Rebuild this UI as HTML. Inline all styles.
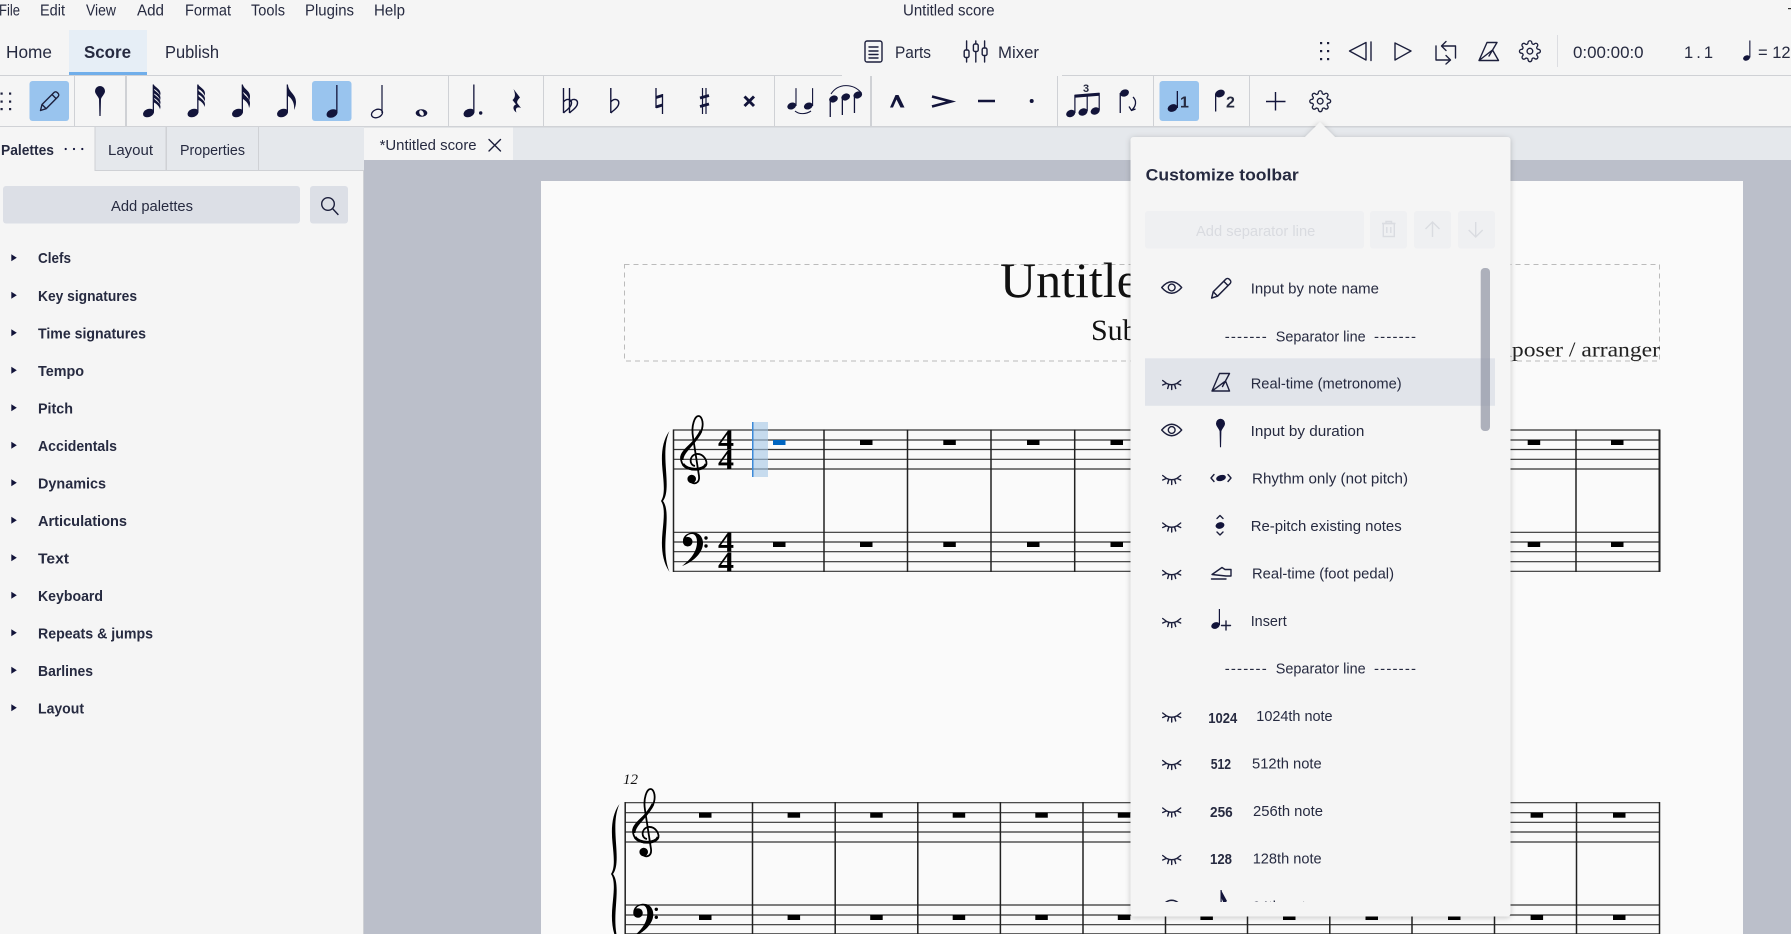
<!DOCTYPE html>
<html lang="en">
<head>
<meta charset="utf-8">
<title>Untitled score</title>
<style>
html,body{margin:0;padding:0;background:#f5f5f5;overflow:hidden}
svg{display:block;position:absolute;left:0;top:0}
text{font-family:"Liberation Sans",sans-serif;fill:#262a40;font-size:15px}
.b{font-weight:700}
.s{font-family:"Liberation Serif",serif;fill:#111}
.ic{fill:none;stroke:#1c1f3c;stroke-width:1.4;stroke-linejoin:round;stroke-linecap:round}
.n{fill:#12143a}
.sep{stroke:#cfd1d5;stroke-width:1}
.st{stroke:#333;stroke-width:1.2}
.bar{stroke:#222;stroke-width:1.5}
.r{fill:#000}
.ds{fill:none;stroke:#dadce1;stroke-width:1.4}
</style>
</head>
<body>
<svg width="1791" height="934" viewBox="0 0 1791 934" xmlns="http://www.w3.org/2000/svg">
<defs>
<g id="q"><ellipse rx="5.7" ry="4" transform="rotate(-22)"/><rect x="4.2" y="-28.5" width="1.3" height="28"/></g>
<path id="fl" d="M0 0C1 4 7 6 7 11C7 13 6.6 15 6 16C6 12 3 9 0 7Z"/>
<path id="fs" d="M0 0C1 2 6.5 4 6.5 8.5L6 11C5.5 8 3 5.500 0 4Z"/>
<path id="pencil" d="M3 21.500L4.500 15.500L16.500 3.500a2.300 2.300 0 0 1 3.200 0l.9.9a2.300 2.300 0 0 1 0 3.200L8.600 19.700ZM14.500 5.500l4 4M4.500 15.500l4 4"/>
<path id="pin" d="M-5 0a5 5 0 0 1 10 0c0 3-3 5-4 8l-.4 17h-1.200L-1 8c-1-3-4-5-4-8z"/>
<path id="flat" d="M0 -13V12M0 1C3 -3 8 -2 8 2C8 6 3 9 0 12" fill="none" stroke="#12143a" stroke-width="1.400"/>
<g id="gear" fill="none" stroke="#1c1f3c" stroke-width="1.400" stroke-linejoin="round"><circle cx="12" cy="12" r="3"/><path d="M19.400 15a1.650 1.650 0 0 0 .33 1.820l.06.06a2 2 0 0 1 0 2.830 2 2 0 0 1-2.830 0l-.06-.06a1.650 1.650 0 0 0-1.820-.33 1.650 1.650 0 0 0-1 1.510V21a2 2 0 0 1-2 2 2 2 0 0 1-2-2v-.09A1.650 1.650 0 0 0 9 19.400a1.650 1.650 0 0 0-1.820.33l-.06.06a2 2 0 0 1-2.830 0 2 2 0 0 1 0-2.830l.06-.06a1.650 1.650 0 0 0 .33-1.820 1.650 1.650 0 0 0-1.510-1H3a2 2 0 0 1-2-2 2 2 0 0 1 2-2h.09A1.650 1.650 0 0 0 4.600 9a1.650 1.650 0 0 0-.33-1.820l-.06-.06a2 2 0 0 1 0-2.830 2 2 0 0 1 2.830 0l.06.06a1.650 1.650 0 0 0 1.820.33H9a1.650 1.650 0 0 0 1-1.510V3a2 2 0 0 1 2-2 2 2 0 0 1 2 2v.09a1.650 1.650 0 0 0 1 1.510 1.650 1.650 0 0 0 1.820-.33l.06-.06a2 2 0 0 1 2.830 0 2 2 0 0 1 0 2.830l-.06.06a1.650 1.650 0 0 0-.33 1.820V9a1.650 1.650 0 0 0 1.510 1H21a2 2 0 0 1 2 2 2 2 0 0 1-2 2h-.09a1.650 1.650 0 0 0-1.510 1z"/></g>
<g id="eye" class="ic" stroke-width="1.300"><path d="M-10 0Q0 -11.500 10 0Q0 11.500 -10 0Z"/><circle r="3.400"/></g>
<path id="eyec" class="ic" stroke-width="1.100" d="M-9 -2.500L-5 .5Q0 3 5 .5L9 -2.500M-9 2L-5.500 .5M9 2L5.500 .5M-3 2L-4 5.500M0 3V6.500M3 2L4 5.500"/>
<g id="tclef"><path d="M0 7C-6 6-6-3 1-5C9-6 13 3 11 6C8 12-14 14-14-1C-14-10 3-17 7-30C9-38 6-43 3.500-43C0-43-4-34-2-22L4 17C5 25-2 26-5 22" fill="none" stroke="#000" stroke-width="1.800"/><path d="M-13 1C-13-8 0-15 6-28M11 5C9 12-8 12-12 5" fill="none" stroke="#000" stroke-width="2.800"/><circle cx="-3.300" cy="20" r="4.300" fill="#000"/></g>
<path id="brace" d="M669.500 431C662 441 661 455 662.500 470C664 485 665 495 661 501C665 507 664 517 662.500 532C661 547 662 561 669.500 572C664.500 560 665 545 666 532C667 518 667.500 507 663 501C667.500 495 667 484 666 470C665 455 664.500 442 669.500 431Z"/>
<g id="bclef"><path d="M683 541C683 535 689 532.500 693 532.500C700 532.500 703 538 703 543C703 553 693 562 682 566C690 560 697 552 697 542C697 537 695 534 692 534C688 534 685 537 686 539Z"/><circle cx="687.700" cy="541.700" r="4.800"/><circle cx="706" cy="538" r="1.700"/><circle cx="706" cy="546" r="1.700"/></g>
<clipPath id="rows"><rect x="1140" y="258" width="360" height="644"/></clipPath>
<filter id="sh" x="-5%" y="-5%" width="110%" height="110%"><feDropShadow dx="0" dy="1" stdDeviation="3" flood-color="#000" flood-opacity=".22"/></filter>
</defs>

<!-- base -->
<rect width="1791" height="934" fill="#f5f5f5"/>
<rect x="0" y="127" width="1791" height="33" fill="#e5e8ec"/>
<rect x="364" y="160" width="1427" height="774" fill="#bbbfca"/>

<!-- score page -->
<rect x="541" y="181" width="1202" height="753" fill="#fafafa"/>
<rect x="624.500" y="264.500" width="1035" height="96.500" fill="none" stroke="#bbb" stroke-dasharray="5 4"/>
<text class="s" x="1000" y="297" style="font-size:50px">Untitled score</text>
<text class="s" x="1091" y="340" style="font-size:30px">Subtitle</text>
<text class="s" x="1466" y="356.500" style="font-size:21px;fill:#222" textLength="194" lengthAdjust="spacingAndGlyphs">Composer / arranger</text>

<!-- system 1 -->
<g class="st">
<path d="M673 430H1660M673 440H1660M673 449.500H1660M673 459.300H1660M673 469H1660M673 532.300H1660M673 542H1660M673 551.700H1660M673 561.700H1660M673 571.300H1660"/>
</g>
<g class="bar"><path d="M673.500 429.500V572M824 429.500V572M907.500 429.500V572M991 429.500V572M1074.700 429.500V572M1158.200 429.500V572M1241.700 429.500V572M1325.200 429.500V572M1408.700 429.500V572M1492.300 429.500V572M1576 429.500V572M1659.500 429.500V572" /></g>
<path d="M1659.500 429.500V572" stroke="#222" stroke-width="2"/>
<use href="#brace" class="r"/>
<use href="#tclef" x="695" y="459"/>
<use href="#bclef" class="r"/>
<text class="s b" x="718" y="449.500" style="font-size:29px;fill:#000" textLength="16" lengthAdjust="spacingAndGlyphs">4</text>
<text class="s b" x="718" y="469" style="font-size:29px;fill:#000" textLength="16" lengthAdjust="spacingAndGlyphs">4</text>
<text class="s b" x="718" y="551.700" style="font-size:29px;fill:#000" textLength="16" lengthAdjust="spacingAndGlyphs">4</text>
<text class="s b" x="718" y="571.500" style="font-size:29px;fill:#000" textLength="16" lengthAdjust="spacingAndGlyphs">4</text>
<rect x="752.500" y="422" width="15.500" height="55" fill="#a4c6e6" opacity=".6"/>
<rect x="752" y="422" width="1.500" height="55" fill="#3c8ad8"/>
<rect x="773" y="440" width="12.500" height="5" fill="#0065c0"/>
<g class="r">
<rect x="860" y="440" width="12.500" height="5"/><rect x="943.300" y="440" width="12.500" height="5"/><rect x="1027" y="440" width="12.500" height="5"/><rect x="1110.500" y="440" width="12.500" height="5"/><rect x="1527.700" y="440" width="12.500" height="5"/><rect x="1611" y="440" width="12.500" height="5"/>
<rect x="773" y="542" width="12.500" height="5"/><rect x="860" y="542" width="12.500" height="5"/><rect x="943.300" y="542" width="12.500" height="5"/><rect x="1027" y="542" width="12.500" height="5"/><rect x="1110.500" y="542" width="12.500" height="5"/><rect x="1527.700" y="542" width="12.500" height="5"/><rect x="1611" y="542" width="12.500" height="5"/>
</g>

<!-- system 2 -->
<text class="s" x="623" y="784" style="font-size:15px;font-style:italic">12</text>
<g class="st">
<path d="M625 802.700H1660M625 812.700H1660M625 822.300H1660M625 832H1660M625 842H1660M625 905H1660M625 915H1660M625 924.700H1660"/>
<path d="M625 933.800H1660"/>
</g>
<g class="bar"><path d="M625.200 802V934M752.500 802V934M835.200 802V934M917.800 802V934M1000.400 802V934M1083 802V934M1165.500 802V934M1247.500 802V934M1329.800 802V934M1412 802V934M1494.500 802V934M1576.500 802V934M1659.500 802V934"/></g>
<g transform="translate(-50 373)"><use href="#brace" class="r"/></g>
<use href="#tclef" x="647" y="832"/>
<g transform="translate(-49.700 371.300)"><use href="#bclef" class="r"/></g>
<g class="r">
<rect x="699" y="812.700" width="12.500" height="5"/><rect x="787.600" y="812.700" width="12.500" height="5"/><rect x="870.200" y="812.700" width="12.500" height="5"/><rect x="952.700" y="812.700" width="12.500" height="5"/><rect x="1035.300" y="812.700" width="12.500" height="5"/><rect x="1117.800" y="812.700" width="12.500" height="5"/><rect x="1530.600" y="812.700" width="12.500" height="5"/><rect x="1613" y="812.700" width="12.500" height="5"/>
<rect x="699" y="915" width="12.500" height="5"/><rect x="787.600" y="915" width="12.500" height="5"/><rect x="870.200" y="915" width="12.500" height="5"/><rect x="952.700" y="915" width="12.500" height="5"/><rect x="1035.300" y="915" width="12.500" height="5"/><rect x="1117.800" y="915" width="12.500" height="5"/><rect x="1200.400" y="915" width="12.500" height="5"/><rect x="1283" y="915" width="12.500" height="5"/><rect x="1365.500" y="915" width="12.500" height="5"/><rect x="1448" y="915" width="12.500" height="5"/><rect x="1530.600" y="915" width="12.500" height="5"/><rect x="1613" y="915" width="12.500" height="5"/>
</g>

<!-- top area cover -->
<rect x="0" y="0" width="1791" height="127" fill="#f5f5f5"/>
<rect x="0" y="75" width="842" height="1" fill="#cfd1d5"/>
<rect x="1062" y="75" width="729" height="1" fill="#cfd1d5"/>
<rect x="0" y="126" width="1791" height="1.500" fill="#d0d2d6"/>

<!-- menu -->
<g style="font-size:15.500px">
<text x="-1" y="15.500" textLength="21" lengthAdjust="spacingAndGlyphs" style="font-size:15.500px">File</text>
<text x="40" y="15.500" textLength="25" lengthAdjust="spacingAndGlyphs" style="font-size:15.500px">Edit</text>
<text x="86" y="15.500" textLength="30" lengthAdjust="spacingAndGlyphs" style="font-size:15.500px">View</text>
<text x="137" y="15.500" textLength="27" lengthAdjust="spacingAndGlyphs" style="font-size:15.500px">Add</text>
<text x="185" y="15.500" textLength="46" lengthAdjust="spacingAndGlyphs" style="font-size:15.500px">Format</text>
<text x="251" y="15.500" textLength="34" lengthAdjust="spacingAndGlyphs" style="font-size:15.500px">Tools</text>
<text x="305" y="15.500" textLength="49" lengthAdjust="spacingAndGlyphs" style="font-size:15.500px">Plugins</text>
<text x="374" y="15.500" textLength="31" lengthAdjust="spacingAndGlyphs" style="font-size:15.500px">Help</text>
<text x="903" y="15.500" textLength="91.600" lengthAdjust="spacingAndGlyphs" style="font-size:15.500px">Untitled score</text>
</g>
<rect x="1788" y="8" width="3" height="1.200" fill="#333"/>

<!-- nav -->
<rect x="69" y="30" width="78" height="42" fill="#e6eef6"/>
<rect x="69" y="72" width="78" height="3" fill="#70aeea"/>
<text x="6" y="58" textLength="46" lengthAdjust="spacingAndGlyphs" style="font-size:17.500px">Home</text>
<text class="b" x="84" y="58" textLength="47" lengthAdjust="spacingAndGlyphs" style="font-size:17.500px">Score</text>
<text x="165" y="58" textLength="54" lengthAdjust="spacingAndGlyphs" style="font-size:17.500px">Publish</text>
<g class="ic"><rect x="865" y="41" width="17" height="21" rx="2"/><path d="M869 47H878M869 51H878M869 54.500H878M869 58H878"/></g>
<text x="895" y="58" textLength="36" lengthAdjust="spacingAndGlyphs" style="font-size:17px">Parts</text>
<g class="ic"><path d="M966.600 41V62M975.800 41V62M984.600 41V62"/><rect x="964.200" y="50" width="4.800" height="7.500" rx="1.500" fill="#f5f5f5"/><rect x="973.400" y="44" width="4.800" height="7.500" rx="1.500" fill="#f5f5f5"/><rect x="982.200" y="48" width="4.800" height="7.500" rx="1.500" fill="#f5f5f5"/></g>
<text x="998" y="58" textLength="41" lengthAdjust="spacingAndGlyphs" style="font-size:17px">Mixer</text>

<!-- playback -->
<g fill="#1c1f3c"><rect x="1320" y="42" width="2.200" height="2.200"/><rect x="1327" y="42" width="2.200" height="2.200"/><rect x="1320" y="50" width="2.200" height="2.200"/><rect x="1327" y="50" width="2.200" height="2.200"/><rect x="1320" y="58" width="2.200" height="2.200"/><rect x="1327" y="58" width="2.200" height="2.200"/></g>
<g class="ic">
<path d="M1349.500 51L1366 42.500V60ZM1371 42V60.500"/>
<path d="M1395 43L1411 51L1395 60Z"/>
<path d="M1455.500 58V46H1441.500M1446 41.500L1441.500 46L1446 50.500M1436 46V60H1450.500M1446 55.500L1450.500 60L1446 64"/>
<path d="M1479 60.500L1487 42.500H1497L1489 56M1492.500 50L1498.500 60.500H1479Z"/>
</g>
<g transform="translate(1518.500 39.800) scale(.95)"><use href="#gear"/></g>
<rect x="1557" y="35" width="1" height="32" fill="#dcdde1"/>
<text x="1573" y="58" textLength="70.600" lengthAdjust="spacingAndGlyphs" style="font-size:16.500px">0:00:00:0</text>
<text x="1684" y="58" textLength="29" lengthAdjust="spacing" style="font-size:16.500px">1 . 1</text>
<g class="n" transform="translate(1746.500 58)"><ellipse rx="3.500" ry="2.600" transform="rotate(-22)"/><rect x="2.800" y="-17.500" width="1.100" height="17"/></g>
<text x="1758" y="58" style="font-size:16.500px">= 120</text>

<!-- toolbar -->
<g fill="#1c1f3c"><rect x=".5" y="92.500" width="2.200" height="2.200"/><rect x="9" y="92.500" width="2.200" height="2.200"/><rect x=".5" y="100.500" width="2.200" height="2.200"/><rect x="9" y="100.500" width="2.200" height="2.200"/><rect x=".5" y="108" width="2.200" height="2.200"/><rect x="9" y="108" width="2.200" height="2.200"/></g>
<rect x="29.500" y="81" width="39.500" height="40" rx="3" fill="#99c4ee"/>
<rect x="312" y="81" width="39.500" height="40" rx="3" fill="#99c4ee"/>
<rect x="1159.500" y="81" width="39.500" height="40" rx="3" fill="#99c4ee"/>
<g class="sep"><path d="M74.500 76V126M448.500 76V126M543.500 76V126M774.500 76V126M1057.500 76V126M1153.500 76V126M1249.500 76V126"/></g>
<path d="M126 76V126M871 76V126" stroke="#cfd1d5" stroke-width="2"/>
<g class="ic" transform="translate(37.500 89)"><use href="#pencil"/></g>
<g class="n">
<use href="#pin" x="100" y="91"/>
<g transform="translate(148.500 113)"><use href="#q"/><use href="#fs" x="5.500" y="-28"/><use href="#fs" x="5.500" y="-23.500"/><use href="#fs" x="5.500" y="-19"/><use href="#fs" x="5.500" y="-14.500"/></g>
<g transform="translate(193 113)"><use href="#q"/><use href="#fs" x="5.500" y="-28"/><use href="#fs" x="5.500" y="-22.500"/><use href="#fs" x="5.500" y="-17"/></g>
<g transform="translate(237.500 113)"><use href="#q"/><use href="#fl" x="5.500" y="-28"/><use href="#fl" x="5.500" y="-21"/></g>
<g transform="translate(282.500 113)"><use href="#q"/><path d="M5.500 -28C6 -21 13.500 -19 13.500 -11C13.500 -8 12.500 -5 11.500 -3C12.500 -10 9 -15 5.500 -17Z"/></g>
<use href="#q" x="332" y="113.500"/>
<g transform="translate(377 113.500)"><ellipse rx="5.700" ry="4" fill="none" stroke="#12143a" stroke-width="1.300" transform="rotate(-22)"/><rect x="4.400" y="-28.500" width="1.200" height="28"/></g>
<g transform="translate(421.500 113)"><ellipse rx="5.800" ry="3.700"/><ellipse rx="2" ry="3" fill="#f5f5f5" transform="rotate(-30)"/></g>
<use href="#q" x="469" y="113"/><circle cx="480.700" cy="113" r="1.700"/>
<path d="M513.500 89L520 97.500C517.500 100 516.500 102 517.500 103.500L521 108C518 106.500 514.500 107.500 516.500 112.500C512.500 110 512.500 105.500 516 104.500L512.500 100C515 98 516 95 513.500 89Z"/>
</g>
<use href="#flat" x="563.500" y="101"/><use href="#flat" x="569.500" y="101"/>
<use href="#flat" x="610.800" y="101"/>
<g fill="none" stroke="#12143a">
<path d="M656 88V108M662.500 94V114" stroke-width="1.300"/>
<path d="M656 97.500L662.500 95.500M656 107L662.500 105" stroke-width="3"/>
<path d="M702.500 88V114M706 88V114" stroke-width="1.200"/>
<path d="M700 98L709 95.500M700 106.500L709 104" stroke-width="2.800"/>
<path d="M744.500 96.500L754 106M754 96.500L744.500 106" stroke-width="2.900"/>
<path d="M795 111C799 114.500 806 114.500 811 111" stroke-width="1.100"/>
<path d="M831 94C838 83 853 83 861.500 93" stroke-width="1.100"/>
<path d="M932 96.500L951 101.500L932 106.500" stroke-width="2.600"/>
<path d="M978 101H995" stroke-width="2.600"/>
<path d="M1133 97C1137 101 1136 106 1132 110M1129 106.500L1131.500 110.500L1135.500 109" stroke-width="1.300"/>
<path d="M1275.500 92V110.500M1266 101.500H1285.500" stroke-width="1.400"/>
</g>
<g class="n">
<g transform="translate(791.700 106) scale(.85)"><ellipse rx="5.300" ry="3.900" transform="rotate(-22)"/><rect x="4.400" y="-21" width="1.300" height="21"/></g>
<g transform="translate(808.300 106) scale(.85)"><ellipse rx="5.300" ry="3.900" transform="rotate(-22)"/><rect x="4.400" y="-21" width="1.300" height="21"/></g>
<g><ellipse cx="833.500" cy="99" rx="4.500" ry="3.400" transform="rotate(-22 833.500 99)"/><rect x="829.600" y="99" width="1.300" height="18"/><ellipse cx="845.700" cy="97" rx="4.500" ry="3.400" transform="rotate(-22 845.700 97)"/><rect x="841.700" y="97" width="1.300" height="18"/><ellipse cx="857.800" cy="95" rx="4.500" ry="3.400" transform="rotate(-22 857.800 95)"/><rect x="853.800" y="95" width="1.300" height="18"/></g>
<path d="M890 107.500L895.500 95H898.500L904.500 107.500H900.500L896.500 99.500L893 107.500Z"/>
<circle cx="1031.700" cy="101" r="2"/>
<g><path d="M1074.500 94.600L1099.500 92.600V95.800L1074.500 97.800Z"/><rect x="1074.300" y="95" width="1.200" height="18"/><rect x="1086.600" y="94" width="1.200" height="17"/><rect x="1098.600" y="93" width="1.200" height="17"/><ellipse cx="1070.700" cy="113.500" rx="4.700" ry="3.500" transform="rotate(-22 1070.700 113.500)"/><ellipse cx="1083" cy="112" rx="4.700" ry="3.500" transform="rotate(-22 1083 112)"/><ellipse cx="1095.200" cy="111" rx="4.700" ry="3.500" transform="rotate(-22 1095.200 111)"/></g>
<ellipse cx="1124.500" cy="93" rx="4.600" ry="3.500" transform="rotate(-22 1124.500 93)"/><rect x="1119.600" y="93" width="1.300" height="20"/>
<ellipse cx="1172.500" cy="108" rx="5" ry="3.700" transform="rotate(-22 1172.500 108)"/><rect x="1176.700" y="91" width="1.300" height="17"/>
<ellipse cx="1220" cy="93.500" rx="5" ry="3.700" transform="rotate(-22 1220 93.500)"/><rect x="1215" y="93.500" width="1.300" height="18"/>
</g>
<text class="b" x="1083" y="92" style="font-size:11px">3</text>
<text class="b" x="1180" y="107.500" style="font-size:16px">1</text>
<text class="b" x="1226" y="107.500" style="font-size:16px">2</text>
<g transform="translate(1308.800 89.800) scale(.95)"><use href="#gear"/></g>

<!-- dock tabs -->
<rect x="0" y="127" width="95" height="44" fill="#f5f5f5"/>
<rect x="95" y="127" width="269" height="43" fill="#e5e8ec"/>
<rect x="94.500" y="127" width="1" height="44" fill="#cfd1d5"/>
<rect x="165.500" y="127" width="1.500" height="43" fill="#cfd1d5"/>
<rect x="258" y="127" width="1" height="43" fill="#cfd1d5"/>
<rect x="95" y="170" width="269" height="1" fill="#cfd1d5"/>
<text class="b" x="1" y="155" textLength="53" lengthAdjust="spacingAndGlyphs" style="font-size:14.500px">Palettes</text>
<g class="n"><circle cx="65.700" cy="149" r="1.100"/><circle cx="74" cy="149" r="1.100"/><circle cx="82.300" cy="149" r="1.100"/></g>
<text x="108" y="155" textLength="45" lengthAdjust="spacingAndGlyphs" style="font-size:15px">Layout</text>
<text x="180" y="155" textLength="65" lengthAdjust="spacingAndGlyphs" style="font-size:15px">Properties</text>

<!-- doc tab -->
<rect x="364" y="127.500" width="149" height="32.500" fill="#f5f5f5"/>
<text x="379.600" y="150" textLength="97" lengthAdjust="spacingAndGlyphs" style="font-size:15px">*Untitled score</text>
<path class="ic" stroke-width="1.200" d="M489 139.500L500.500 151M500.500 139.500L489 151"/>

<!-- left panel -->
<rect x="0" y="171" width="363.500" height="763" fill="#f5f5f5"/>
<rect x="3" y="186" width="297" height="37.500" rx="3" fill="#dcdfe6"/>
<rect x="310" y="186" width="38" height="37.500" rx="3" fill="#dcdfe6"/>
<text x="111" y="211" textLength="82" lengthAdjust="spacingAndGlyphs" style="font-size:15px">Add palettes</text>
<g class="ic"><circle cx="328" cy="204" r="6.300"/><path d="M332.500 208.500L338 214.500"/></g>
<g class="n"><path d="M11.300 254.200L16.800 257.700L11.300 261.200Z"/><path d="M11.300 291.700L16.800 295.200L11.300 298.700Z"/><path d="M11.300 329.200L16.800 332.700L11.300 336.200Z"/><path d="M11.300 366.700L16.800 370.200L11.300 373.700Z"/><path d="M11.300 404.200L16.800 407.700L11.300 411.200Z"/><path d="M11.300 441.700L16.800 445.200L11.300 448.700Z"/><path d="M11.300 479.200L16.800 482.700L11.300 486.200Z"/><path d="M11.300 516.700L16.800 520.200L11.300 523.700Z"/><path d="M11.300 554.200L16.800 557.700L11.300 561.200Z"/><path d="M11.300 591.700L16.800 595.200L11.300 598.700Z"/><path d="M11.300 629.200L16.800 632.700L11.300 636.200Z"/><path d="M11.300 666.700L16.800 670.200L11.300 673.700Z"/><path d="M11.300 704.200L16.800 707.700L11.300 711.200Z"/></g>
<g>
<text class="b" x="38" y="263.200" textLength="33" lengthAdjust="spacingAndGlyphs">Clefs</text>
<text class="b" x="38" y="301" textLength="99" lengthAdjust="spacingAndGlyphs">Key signatures</text>
<text class="b" x="38" y="338.500" textLength="108" lengthAdjust="spacingAndGlyphs">Time signatures</text>
<text class="b" x="38" y="376" textLength="46" lengthAdjust="spacingAndGlyphs">Tempo</text>
<text class="b" x="38" y="413.500" textLength="35" lengthAdjust="spacingAndGlyphs">Pitch</text>
<text class="b" x="38" y="451" textLength="79" lengthAdjust="spacingAndGlyphs">Accidentals</text>
<text class="b" x="38" y="488.500" textLength="68" lengthAdjust="spacingAndGlyphs">Dynamics</text>
<text class="b" x="38" y="526" textLength="89" lengthAdjust="spacingAndGlyphs">Articulations</text>
<text class="b" x="38" y="563.500" textLength="31" lengthAdjust="spacingAndGlyphs">Text</text>
<text class="b" x="38" y="601" textLength="65" lengthAdjust="spacingAndGlyphs">Keyboard</text>
<text class="b" x="38" y="638.500" textLength="115" lengthAdjust="spacingAndGlyphs">Repeats &amp; jumps</text>
<text class="b" x="38" y="676" textLength="55" lengthAdjust="spacingAndGlyphs">Barlines</text>
<text class="b" x="38" y="713.500" textLength="46" lengthAdjust="spacingAndGlyphs">Layout</text>
</g>
<rect x="363" y="171" width="1" height="763" fill="#cfd1d5"/>

<!-- popup -->
<g filter="url(#sh)">
<path d="M1133.500 137H1305L1320 122L1335 137H1507.500a3 3 0 0 1 3 3V913.500a3 3 0 0 1-3 3H1133.500a3 3 0 0 1-3-3V140a3 3 0 0 1 3-3Z" fill="#f5f5f5"/>
</g>
<text class="b" x="1145.700" y="180.500" textLength="153" lengthAdjust="spacingAndGlyphs" style="font-size:16.500px">Customize toolbar</text>
<rect x="1145" y="211" width="219" height="37.500" rx="3" fill="#eff0f2"/>
<rect x="1370" y="211" width="37" height="37.500" rx="3" fill="#eff0f2"/>
<rect x="1414" y="211" width="37" height="37.500" rx="3" fill="#eff0f2"/>
<rect x="1458" y="211" width="37" height="37.500" rx="3" fill="#eff0f2"/>
<text x="1196" y="236" textLength="119.300" lengthAdjust="spacingAndGlyphs" style="font-size:15px;fill:#d9dbe0">Add separator line</text>
<g class="ds"><path d="M1382 223.500H1395.500M1386 223.500V221.500H1391.500V223.500"/><rect x="1383.300" y="223.500" width="11" height="13"/><path d="M1386.800 227V233M1390.800 227V233"/>
<path d="M1432.500 222V237M1425.500 229L1432.500 222L1439.500 229"/>
<path d="M1475.700 222V237M1468.700 230L1475.700 237L1482.700 230"/></g>

<rect x="1145" y="358.300" width="350" height="47.500" fill="#e1e4ea"/>

<g clip-path="url(#rows)">
<use href="#eye" x="1171.700" y="287.500"/>
<g class="ic" transform="translate(1208.500 275.500) scale(1.050)"><use href="#pencil"/></g>
<text x="1250.700" y="293.500" textLength="128.300" lengthAdjust="spacingAndGlyphs">Input by note name</text>

<text x="1224.700" y="341.500" textLength="42" lengthAdjust="spacing">-------</text>
<text x="1275.700" y="341.500" textLength="90" lengthAdjust="spacingAndGlyphs">Separator line</text>
<text x="1374" y="341.500" textLength="42" lengthAdjust="spacing">-------</text>

<use href="#eyec" x="1171.700" y="383"/>
<path class="ic" d="M1212 391L1219.500 373.500H1229.500L1222.500 386.500M1225.500 381L1229.500 391H1212Z"/>
<text x="1250.700" y="388.500" textLength="151" lengthAdjust="spacingAndGlyphs">Real-time (metronome)</text>

<use href="#eye" x="1171.700" y="430"/>
<g class="n" transform="translate(1220.500 423.500) scale(.9 .95)"><use href="#pin"/></g>
<text x="1250.700" y="436" textLength="113.700" lengthAdjust="spacingAndGlyphs">Input by duration</text>

<use href="#eyec" x="1171.700" y="478"/>
<ellipse class="n" cx="1221" cy="478" rx="5" ry="3" transform="rotate(-15 1221 478)"/>
<path class="ic" stroke-width="1.300" d="M1214 474.500L1211 478L1214 481.500M1228 474.500L1231 478L1228 481.500"/>
<text x="1252" y="483.700" textLength="156" lengthAdjust="spacingAndGlyphs">Rhythm only (not pitch)</text>

<use href="#eyec" x="1171.700" y="525.500"/>
<ellipse class="n" cx="1220" cy="525.500" rx="4.500" ry="3.200" transform="rotate(-15 1220 525.500)"/>
<path class="ic" stroke-width="1.300" d="M1217 518.500L1220 515.500L1223 518.500M1217 532L1220 535L1223 532"/>
<text x="1250.700" y="531" textLength="151" lengthAdjust="spacingAndGlyphs">Re-pitch existing notes</text>

<use href="#eyec" x="1171.700" y="573"/>
<path class="ic" stroke-width="1.200" d="M1212 574.500L1222 567.500L1225 569.500H1231V576H1226L1212 574.500ZM1211.500 579H1226"/>
<text x="1252" y="578.500" textLength="142" lengthAdjust="spacingAndGlyphs">Real-time (foot pedal)</text>

<use href="#eyec" x="1171.700" y="621"/>
<g class="n" transform="translate(1215.500 625.500)"><ellipse rx="4.400" ry="3.200" transform="rotate(-22)"/><rect x="3.300" y="-16.500" width="1.200" height="16"/></g>
<path class="ic" stroke-width="1.200" d="M1226 621V630M1221.500 625.500H1230.500"/>
<text x="1250.700" y="626" textLength="36" lengthAdjust="spacingAndGlyphs">Insert</text>

<text x="1224.700" y="673.500" textLength="42" lengthAdjust="spacing">-------</text>
<text x="1275.700" y="673.500" textLength="90" lengthAdjust="spacingAndGlyphs">Separator line</text>
<text x="1374" y="673.500" textLength="42" lengthAdjust="spacing">-------</text>

<use href="#eyec" x="1171.700" y="715.500"/>
<text class="b" x="1208.300" y="723" textLength="29" lengthAdjust="spacingAndGlyphs" style="font-size:14.500px">1024</text>
<text x="1256.300" y="721" textLength="76.300" lengthAdjust="spacingAndGlyphs">1024th note</text>

<use href="#eyec" x="1171.700" y="763"/>
<text class="b" x="1210.700" y="769" textLength="20.300" lengthAdjust="spacingAndGlyphs" style="font-size:14.500px">512</text>
<text x="1252" y="768.500" textLength="69.700" lengthAdjust="spacingAndGlyphs">512th note</text>

<use href="#eyec" x="1171.700" y="810.500"/>
<text class="b" x="1210" y="817" textLength="22.700" lengthAdjust="spacingAndGlyphs" style="font-size:14.500px">256</text>
<text x="1253" y="816" textLength="70" lengthAdjust="spacingAndGlyphs">256th note</text>

<use href="#eyec" x="1171.700" y="858"/>
<text class="b" x="1210" y="864" textLength="22" lengthAdjust="spacingAndGlyphs" style="font-size:14.500px">128</text>
<text x="1252.700" y="863.500" textLength="69" lengthAdjust="spacingAndGlyphs">128th note</text>

<use href="#eye" x="1171.700" y="906"/>
<g class="n"><rect x="1220.500" y="890" width="1.200" height="14"/><path d="M1221 890L1227 901L1224 904L1221 897Z"/></g>
<text x="1252" y="911.500" textLength="62" lengthAdjust="spacingAndGlyphs">64th note</text>
</g>

<rect x="1480.700" y="268" width="9.300" height="163" rx="4" fill="#8f93a3" opacity=".7"/>
</svg>
</body>
</html>
